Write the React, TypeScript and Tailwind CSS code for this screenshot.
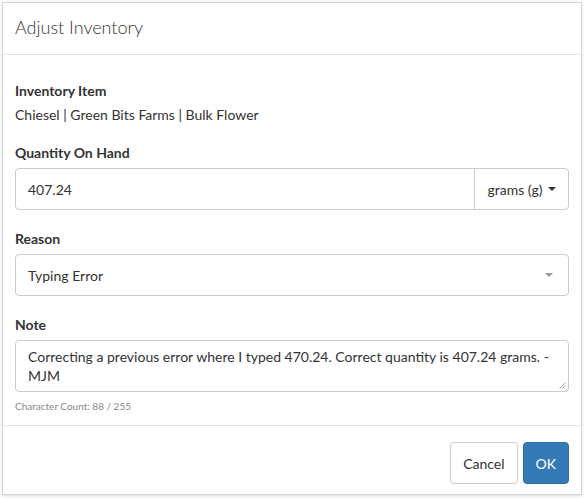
import React from 'react'

function Caret({ className }: { className?: string }) {
  return (
    <svg width="8" height="4" viewBox="0 0 8 4" className={className}>
      <path d="M0 0h8L4 4z" fill="currentColor" />
    </svg>
  )
}

function Label({ children }: { children: React.ReactNode }) {
  return <div className="text-[14px] leading-5 font-bold text-[#333] mb-[5px]">{children}</div>
}

export default function App() {
  return (
    <div className="w-[584px] h-[499px] bg-white pt-[2px] pl-[2px] font-['Lato','Liberation_Sans',sans-serif] text-[#333]">
      <div className="w-[580px] h-[493px] bg-white border border-[#d6d6d6] shadow-[0_1px_3px_rgba(0,0,0,0.15)] flex flex-col">
        {/* Header */}
        <div className="px-[12px] pt-[11px] pb-[13px] border-b border-[#e5e5e5]">
          <h4 className="text-[18px] leading-[27px] font-light">Adjust Inventory</h4>
        </div>

        {/* Body */}
        <div className="px-[12px] pt-[26px] flex-1">
          <Label>Inventory Item</Label>
          <div className="text-[14px] leading-5 -mt-[1px]">Chiesel | Green Bits Farms | Bulk Flower</div>

          <div className="mt-[18px]">
            <Label>Quantity On Hand</Label>
            <div className="flex h-[42px] border border-[#ccc] rounded-[4px]">
              <div className="flex-1 flex items-center px-3 text-[14px]">407.24</div>
              <div className="w-[94px] border-l border-[#ccc] flex items-center justify-center gap-[5px] text-[14px]">
                grams (g)
                <Caret className="text-[#333]" />
              </div>
            </div>
          </div>

          <div className="mt-[19px]">
            <Label>Reason</Label>
            <div className="flex items-center justify-between h-[42px] border border-[#ccc] rounded-[4px] px-3 text-[14px]">
              <span>Typing Error</span>
              <Caret className="text-[#999] mr-[3px]" />
            </div>
          </div>

          <div className="mt-[19px]">
            <Label>Note</Label>
            <div className="relative h-[52px] border border-[#ccc] rounded-[4px] px-3 pt-[6px] text-[14px] leading-[19px]">
              Correcting a previous error where I typed 470.24. Correct quantity is 407.24 grams. - MJM
              <svg width="7" height="7" viewBox="0 0 7 7" className="absolute right-[2px] bottom-[2px] text-[#888]">
                <path d="M6.5 0.5L0.5 6.5M6.5 3.5L3.5 6.5" stroke="currentColor" strokeWidth="0.8" />
              </svg>
            </div>
            <div className="text-[10px] leading-[14px] text-[#888] mt-[7px]">Character Count: 88 / 255</div>
          </div>
        </div>

        {/* Footer */}
        <div className="border-t border-[#e5e5e5] pt-[16px] pb-[10px] px-[12px] flex justify-end gap-[5px]">
          <button className="h-[42px] px-3 border border-[#ccc] rounded-[4px] bg-white text-[14px] text-[#333]">Cancel</button>
          <button className="h-[42px] px-3 border border-[#2e6da4] rounded-[4px] bg-[#337ab7] text-[14px] text-white">OK</button>
        </div>
      </div>
    </div>
  )
}
